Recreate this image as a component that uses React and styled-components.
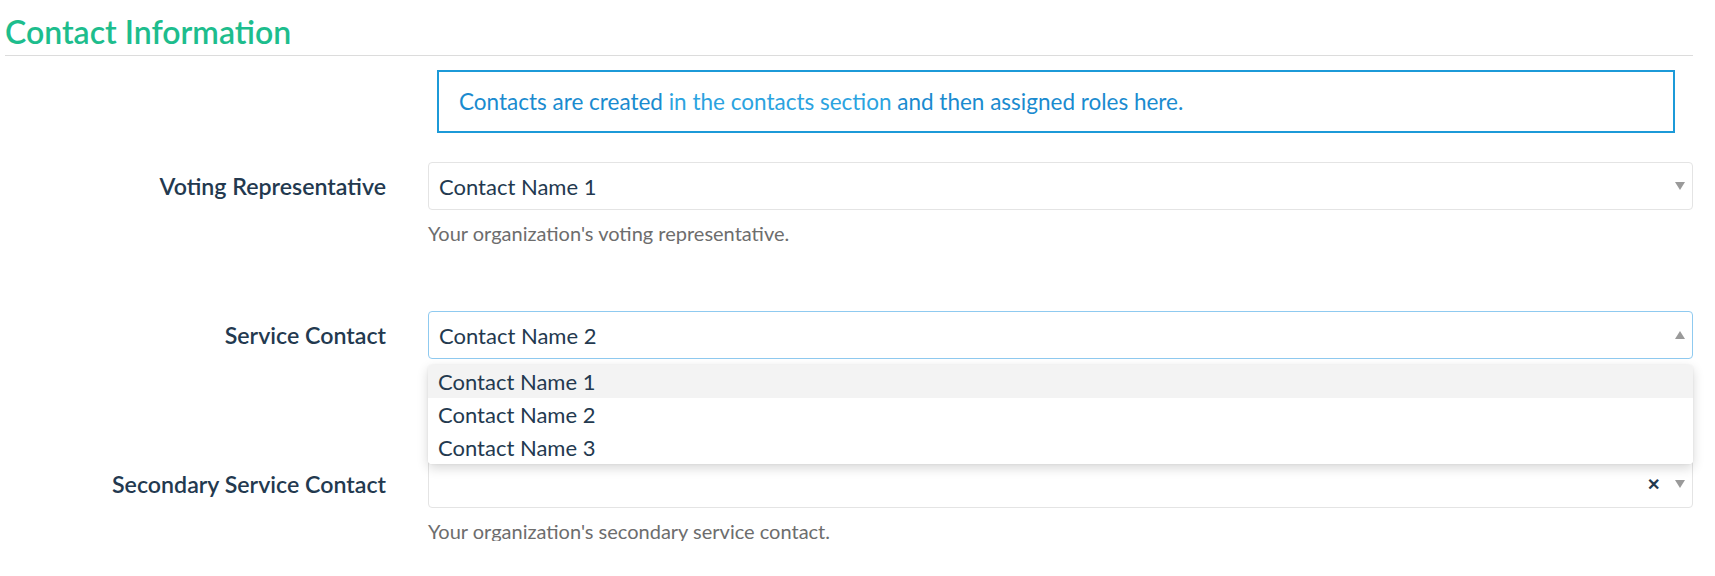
import styled, { createGlobalStyle, css } from "styled-components";

const GlobalStyle = createGlobalStyle`
  body {
    margin: 0;
    background: #ffffff;
    font-family: Lato, "Open Sans", sans-serif;
  }
`;

const Page = styled.div`
  padding: 13px 22px 0 5px;
`;

const SectionTitle = styled.h2`
  margin: 0;
  padding-bottom: 5px;
  border-bottom: 1px solid #dcdcdc;
  color: #1dbd8d;
  font-size: 32px;
  font-weight: 600;
  line-height: 37px;
`;

const Row = styled.div`
  display: grid;
  grid-template-columns: 381px 1fr;
  column-gap: 42px;
  align-items: start;
  margin-bottom: ${(p) => p.$gap ?? 68}px;
`;

const InfoBox = styled.div`
  margin: 14px 18px 0 9px;
  height: 59px;
  border: 2px solid #1c9ad8;
  display: flex;
  align-items: center;
  padding: 0 20px;
  font-size: 22.5px;
  color: #1a8bcf;
`;

const InfoLink = styled.span`
  color: #2ba3e0;
`;

const Label = styled.label`
  text-align: right;
  line-height: 48px;
  font-size: 23.2px;
  font-weight: 600;
  color: #23394f;
`;

const Field = styled.div`
  position: relative;
`;

const SelectBox = styled.div`
  height: 48px;
  box-sizing: border-box;
  border: 1px solid ${(p) => (p.$open ? "#8fcaf0" : "#e4e4e4")};
  border-radius: 4px;
  display: flex;
  align-items: center;
  padding: 0 7px 0 10px;
  font-size: 22px;
  color: #23394f;
  background: #fff;
`;

const Value = styled.span`
  flex: 1;
`;

const Clear = styled.span`
  font-size: 16px;
  color: #23394f;
  margin-right: 15px;
  font-weight: 700;
`;

const Arrow = styled.span`
  width: 0;
  height: 0;
  border-left: 5px solid transparent;
  border-right: 5px solid transparent;
  ${(p) =>
    p.$up
      ? css`border-bottom: 8px solid #9a9a9a;`
      : css`border-top: 8px solid #9a9a9a;`}
`;

const Help = styled.div`
  margin-top: 13px;
  font-size: 20px;
  line-height: 20px;
  color: #6d6d6d;
`;

const Menu = styled.ul`
  position: absolute;
  top: 54px;
  left: 0;
  right: 0;
  margin: 0;
  padding: 0;
  list-style: none;
  background: #fff;
  border-radius: 4px;
  box-shadow: 0 4px 12px rgba(0, 0, 0, 0.16), 0 0 2px rgba(0, 0, 0, 0.08);
  z-index: 5;
  overflow: hidden;
`;

const Option = styled.li`
  height: 33px;
  line-height: 33px;
  padding: 0 10px;
  font-size: 22px;
  color: #23394f;
  background: ${(p) => (p.$active ? "#f3f3f3" : "#fff")};
`;

const contacts = ["Contact Name 1", "Contact Name 2", "Contact Name 3"];

const fields = [
  {
    label: "Voting Representative",
    value: "Contact Name 1",
    help: "Your organization's voting representative.",
  },
  { label: "Service Contact", value: "Contact Name 2", open: true },
  {
    label: "Secondary Service Contact",
    value: "",
    clearable: true,
    help: "Your organization's secondary service contact.",
  },
];

export default function App() {
  return (
    <Page>
      <GlobalStyle />
      <SectionTitle>Contact Information</SectionTitle>
      <Row $gap={29}>
        <div />
        <InfoBox>
          <span>
            Contacts are created <InfoLink>in the contacts section</InfoLink> and then
            assigned roles here.
          </span>
        </InfoBox>
      </Row>
      {fields.map((f, i) => (
        <Row key={f.label} $gap={i === fields.length - 1 ? 0 : 68}>
          <Label>{f.label}</Label>
          <Field>
            <SelectBox $open={f.open}>
              <Value>{f.value}</Value>
              {f.clearable && <Clear>✕</Clear>}
              <Arrow $up={f.open} />
            </SelectBox>
            <Help>{f.help || "\u00a0"}</Help>
            {f.open && (
              <Menu>
                {contacts.map((c, j) => (
                  <Option key={c} $active={j === 0}>
                    {c}
                  </Option>
                ))}
              </Menu>
            )}
          </Field>
        </Row>
      ))}
    </Page>
  );
}
